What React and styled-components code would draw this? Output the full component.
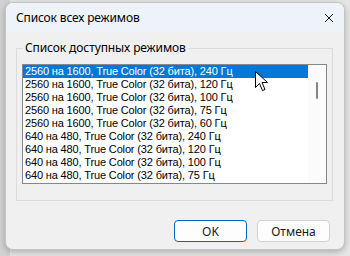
import styled, { createGlobalStyle } from 'styled-components';

const modes = [
  '2560 на 1600, True Color (32 бита), 240 Гц',
  '2560 на 1600, True Color (32 бита), 120 Гц',
  '2560 на 1600, True Color (32 бита), 100 Гц',
  '2560 на 1600, True Color (32 бита), 75 Гц',
  '2560 на 1600, True Color (32 бита), 60 Гц',
  '640 на 480, True Color (32 бита), 240 Гц',
  '640 на 480, True Color (32 бита), 120 Гц',
  '640 на 480, True Color (32 бита), 100 Гц',
  '640 на 480, True Color (32 бита), 75 Гц',
];

const GlobalStyle = createGlobalStyle`
  html, body {
    margin: 0;
    width: 350px;
    height: 256px;
    overflow: hidden;
    background: #e6e6e6;
  }
`;

const Desktop = styled.div`
  width: 350px;
  height: 256px;
  padding: 2px 0 0 5px;
  box-sizing: border-box;
  background: linear-gradient(to right, #d2d2d2 0 10px, #e6e6e6 10px);
`;

const Window = styled.div`
  position: relative;
  width: 340px;
  height: 248px;
  box-sizing: border-box;
  border: 1px solid #c4c4c4;
  border-radius: 8px;
  overflow: hidden;
  background: #f0f0f0;
  box-shadow: 0 2px 6px rgba(0, 0, 0, 0.25);
  display: flex;
  flex-direction: column;
  font-family: 'Noto Sans', 'Liberation Sans', sans-serif;
  color: #000;
`;

const TitleBar = styled.div`
  height: 29px;
  flex: none;
  display: flex;
  align-items: center;
  justify-content: space-between;
  padding: 0 10px 0 10px;
  background: #eef3f9;
`;

const Title = styled.span`
  font-size: 12px;
  padding-bottom: 1px;
  letter-spacing: -0.15px;
`;

const CloseIcon = styled.svg`
  width: 10px;
  height: 10px;
`;

const Body = styled.div`
  flex: 1;
  display: flex;
  flex-direction: column;
  padding: 9px 11px 0 10px;
`;

const Group = styled.fieldset`
  margin: 0;
  padding: 9px 5px 16px 5px;
  border: 1px solid #dcdcdc;
  min-width: 0;
`;

const Legend = styled.legend`
  font-size: 12px;
  padding: 0 2px;
  margin-left: 1px;
  line-height: 14px;
  letter-spacing: -0.1px;
`;

const ListBox = styled.div`
  position: relative;
  display: flex;
  height: 120px;
  box-sizing: border-box;
  border: 1px solid #828790;
  background: #fff;
`;

const Rows = styled.div`
  flex: 1;
  display: flex;
  flex-direction: column;
`;

const Row = styled.div`
  height: 13px;
  line-height: 13px;
  padding-left: 2px;
  font-family: 'Liberation Sans', Arial, sans-serif;
  font-size: 11px;
  letter-spacing: -0.15px;
  white-space: nowrap;
  background: ${(p) => (p.$selected ? '#0078d7' : 'transparent')};
  color: ${(p) => (p.$selected ? '#fff' : '#000')};
`;

const ScrollTrack = styled.div`
  width: 18px;
  flex: none;
  background: #fbfbfb;
  display: flex;
  justify-content: center;
  padding-top: 17px;
`;

const Thumb = styled.div`
  width: 2px;
  height: 17px;
  border-radius: 1px;
  background: #858585;
`;

const Cursor = styled.svg`
  position: absolute;
  left: 232px;
  top: 6px;
  width: 13px;
  height: 21px;
`;

const Footer = styled.div`
  display: flex;
  justify-content: flex-end;
  gap: 10px;
  padding: 19px 3px 0 0;
`;

const Button = styled.button`
  width: 73px;
  height: 22px;
  box-sizing: border-box;
  border-radius: 4px;
  border: 1px solid ${(p) => (p.$default ? '#0067c0' : '#d0d0d0')};
  background: #fdfdfd;
  font-family: 'Noto Sans', 'Liberation Sans', sans-serif;
  font-size: 12px;
  color: #1a1a1a;
  padding: 0;
`;

export default function App() {
  return (
    <>
      <GlobalStyle />
      <Desktop>
        <Window>
          <TitleBar>
            <Title>Список всех режимов</Title>
            <CloseIcon viewBox="0 0 10 10">
              <path d="M1 1 L9 9 M9 1 L1 9" stroke="#1a1a1a" strokeWidth="1" fill="none" />
            </CloseIcon>
          </TitleBar>
          <Body>
            <Group>
              <Legend>Список доступных режимов</Legend>
              <ListBox>
                <Rows>
                  {modes.map((m, i) => (
                    <Row key={i} $selected={i === 0}>
                      {m}
                    </Row>
                  ))}
                </Rows>
                <ScrollTrack>
                  <Thumb />
                </ScrollTrack>
                <Cursor viewBox="0 0 13 21">
                  <path
                    d="M0.5 0.5 L0.5 16.5 L4.5 12.5 L7.5 19.5 L10 18.5 L7 11.5 L12.5 11.5 Z"
                    fill="#fff"
                    stroke="#000"
                    strokeWidth="1"
                    strokeLinejoin="miter"
                  />
                </Cursor>
              </ListBox>
            </Group>
            <Footer>
              <Button $default>OK</Button>
              <Button>Отмена</Button>
            </Footer>
          </Body>
        </Window>
      </Desktop>
    </>
  );
}
